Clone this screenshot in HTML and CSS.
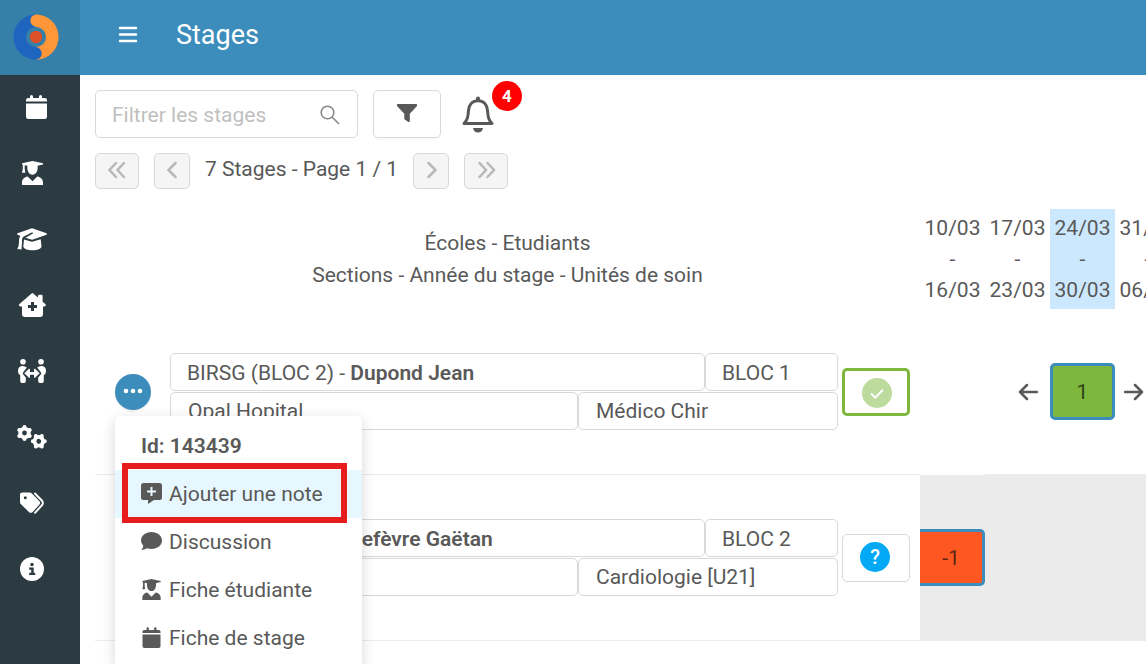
FILE: index.html
```
<!DOCTYPE html>
<html lang="fr">
<head>
<meta charset="UTF-8">
<meta name="viewport" content="width=device-width, initial-scale=1.0">
<title>Stages</title>
<link rel="stylesheet" href="styles.css">
</head>
<body>
    <!-- Shared icons -->
    <svg class="sprite" aria-hidden="true">
        <symbol id="icon-student" viewBox="0 0 21 24">
            <path d="M0 2.3 10.5 0 21 2.3v1.2L15.6 4.8c.7 4.500-1.400 9-5.100 9s-5.800-4.500-5.100-9L2.700 4.200v3.600l.600 4H0l.800-4V3.800L0 3.500z"/>
            <path d="M0 24v-2.500c0-3.400 2.400-5.500 5.700-6L10.500 20.300 15.300 15.500c3.300.5 5.700 2.600 5.700 6V24z"/>
        </symbol>
    </svg>

    <div class="sidebar">
        <a class="logo" href="#" aria-label="Accueil">
            <svg width="46" height="46" viewBox="0 0 46 46">
                <path d="M23 6.700a16.300 16.300 0 0 0 0 32.600" fill="none" stroke="#1e65c0" stroke-width="12.500"/>
                <path d="M23 6.700a16.300 16.300 0 0 1 0 32.600" fill="none" stroke="#ff9637" stroke-width="12.500"/>
                <circle cx="23.500" cy="6.700" r="6.200" fill="#ff9637"/>
                <circle cx="22.500" cy="39.300" r="6.200" fill="#1e65c0"/>
                <circle cx="23" cy="23" r="6.200" fill="#dc5028"/>
            </svg>
        </a>
        <nav class="menu">
            <a href="#" aria-label="Calendrier">
                <svg viewBox="0 0 32 32"><path d="M10 9.500V8.200Q10 6 12.200 6H14V4.500a1.500 1.500 0 0 1 3 0V6h6V4.500a1.500 1.500 0 0 1 3 0V6h2.800Q31 6 31 8.200v1.300zM10 11.500h21v13.300Q31 27 28.800 27H12.200Q10 27 10 24.800z"/></svg>
            </a>
            <a href="#" aria-label="Etudiants">
                <svg viewBox="0 0 32 32"><use href="#icon-student" x="6" y="3" width="21" height="24"/></svg>
            </a>
            <a href="#" aria-label="Écoles">
                <svg viewBox="0 0 32 32">
                    <path d="M15.200 4.400q.8-.3 1.600 0L30.500 9.300q1 .7 0 1.400L17 15.600q-1 .3-2 0L9.500 13.700 17 9.500l-.7-1.200L7.300 12.800q-1.300 1.200-1.300 3.200v2.300L5.500 25.500 1.300 25q1.700-3 1.700-6.500v-2.500q.1-2.300 1.400-4L1.600 10.800q-1.200-.8 0-1.500z"/>
                    <path d="M8 15.500 14.800 17.600q1.200.3 2.400 0L24.700 15.200l.8 7.300c0 2.200-4.500 3.800-9 3.800S7.300 24.700 7.300 22.500z"/>
                </svg>
            </a>
            <a href="#" aria-label="Hôpitaux">
                <svg viewBox="0 0 32 32"><path fill-rule="evenodd" d="M15.600 3.400q.8-.7 1.600 0L22 7.400V6q0-1.200 1.200-1.200h2.200q1.200 0 1.200 1.200v5.700l3 2.600q.8 1.800-1 2.300H27v8q0 2.400-2.400 2.400H8.500Q6 27 6 24.600v-8H4.200q-1.800-.5-1-2.300zM15 12v3h-3v3h3v3h3v-3h3v-3h-3v-3z"/></svg>
            </a>
            <a href="#" aria-label="Encadrement">
                <svg viewBox="0 0 32 32">
                    <circle cx="7" cy="5.700" r="2.800"/>
                    <circle cx="25" cy="5.700" r="2.800"/>
                    <path d="M2 14.500Q2.300 10 6.500 10q2.700 0 4.300 1.600L7 16.500q-.5 1 .2 2l2.600 3V25q0 2-1.600 2H6q-1.800 0-1.800-2v-6Q2 18.500 2 14.500zM30 14.500Q29.700 10 25.500 10q-2.700 0-4.300 1.600L25 16.500q.5 1-.2 2l-2.600 3V25q0 2 1.600 2H26q1.800 0 1.800-2v-6Q30 18.500 30 14.500z"/>
                    <path d="M8.300 17.300 13 12.800q1-.4 1 .8V16h4v-2.400q0-1.200 1-.8l4.700 4.500L19 21.800q-1 .4-1-.8v-2.300h-4V21q0 1.200-1 .8z"/>
                </svg>
            </a>
            <a href="#" aria-label="Paramètres">
                <svg viewBox="0 0 32 32">
                    <g id="gear">
                        <circle cx="8.500" cy="11" r="6.200"/>
                        <path class="teeth" d="M8.500 5v12M3.300 8l10.400 6M3.300 14l10.400-6"/>
                        <circle class="hole" cx="8.500" cy="11" r="2.400"/>
                    </g>
                    <use href="#gear" transform="translate(14.300 8.300) rotate(30 8.500 11)"/>
                </svg>
            </a>
            <a href="#" aria-label="Étiquettes">
                <svg viewBox="0 0 32 32">
                    <path fill-rule="evenodd" d="M4 6.500Q4 4.500 6.200 4.500h7.300q1.400 0 2.400 1l7.400 7.400q1.800 1.900 0 3.800l-6.600 7.200q-1.900 1.700-3.800 0L5.200 16.500Q4 15.500 4 14zM9.300 8.200a1.500 1.500 0 1 0 0 3 1.500 1.500 0 0 0 0-3z"/>
                    <path class="line" d="m19 5.500 7 7.200q1.600 2.200 0 4.400l-7 7.700"/>
                </svg>
            </a>
            <a href="#" aria-label="Informations">
                <svg viewBox="0 0 32 32">
                    <circle cx="16" cy="15" r="12"/>
                    <circle class="hole" cx="16" cy="10.500" r="1.700"/>
                    <path class="hole" d="M13.200 13.500h4.500v5.300h1.500V21h-6v-2.200h2v-3.100h-2z"/>
                </svg>
            </a>
        </nav>
    </div>

    <div class="page">
        <header class="topbar">
            <button class="burger" aria-label="Menu">
                <svg width="20" height="18" viewBox="0 0 20 18"><path d="M2 2h16M2 8.500h16M2 15h16"/></svg>
            </button>
            <h1>Stages</h1>
        </header>

        <main class="content">
            <div class="toolbar">
                <div class="search">
                    <input type="text" placeholder="Filtrer les stages" aria-label="Filtrer les stages">
                    <svg width="20" height="20" viewBox="0 0 20 20"><circle cx="7.500" cy="7.500" r="6.300"/><path d="m12 12 7 7"/></svg>
                </div>
                <button class="filter" aria-label="Filtrer">
                    <svg width="22" height="20" viewBox="0 0 22 20"><path d="M1.500 1h19q1.200.5.500 2l-7.200 7.700v7.600q-.3 1.100-1.400.7l-3.300-2.300q-.8-.5-.8-1.300v-4.700L1 3Q.3 1.500 1.500 1z"/></svg>
                </button>
                <button class="bell" aria-label="Notifications">
                    <svg width="32" height="37" viewBox="0 0 32 37">
                        <path class="line" d="M2 27.500c3.500-3.500 4-6.500 4.500-13C7 8.500 10.500 4.700 16 4.700s9 3.800 9.500 9.800c.5 6.500 1 9.500 4.500 13z"/>
                        <path d="M14 4V2.500a2 2 0 0 1 4 0V4zM11 32h10q-1 4.500-5 4.500T11 32z"/>
                    </svg>
                    <span class="badge">4</span>
                </button>
            </div>

            <div class="pager">
                <button class="wide" disabled aria-label="Première page">
                    <svg width="20" height="18" viewBox="0 0 20 18"><path d="M9 2 2.500 9 9 16M17 2l-6.500 7 6.500 7"/></svg>
                </button>
                <button disabled aria-label="Page précédente">
                    <svg width="20" height="18" viewBox="0 0 20 18"><path d="M13.500 2 6.500 9l7 7"/></svg>
                </button>
                <span>7 Stages - Page 1 / 1</span>
                <button disabled aria-label="Page suivante">
                    <svg width="20" height="18" viewBox="0 0 20 18"><path d="m7.500 2 7 7-7 7"/></svg>
                </button>
                <button class="wide" disabled aria-label="Dernière page">
                    <svg width="20" height="18" viewBox="0 0 20 18"><path d="m3.500 2 6.500 7-6.500 7M11.500 2l6.500 7-6.500 7"/></svg>
                </button>
            </div>

            <div class="planning">
                <div class="row head">
                    <div class="titles">
                        <div>Écoles - Etudiants</div>
                        <div>Sections - Année du stage - Unités de soin</div>
                    </div>
                    <div class="weeks">
                        <div class="week">10/03<br>-<br>16/03</div>
                        <div class="week">17/03<br>-<br>23/03</div>
                        <div class="week current">24/03<br>-<br>30/03</div>
                        <div class="week">31/03<br>-<br>06/04</div>
                    </div>
                </div>

                <div class="row">
                    <div class="stage">
                        <div class="actions">
                            <button class="more" aria-label="Actions">
                                <svg width="20" height="6" viewBox="0 0 20 6"><circle cx="3" cy="3" r="2.300"/><circle cx="10" cy="3" r="2.300"/><circle cx="17" cy="3" r="2.300"/></svg>
                            </button>
                            <div class="dropdown">
                                <div class="item"><b>Id: 143439</b></div>
                                <button class="item active">
                                    <svg viewBox="0 0 21 21"><path fill-rule="evenodd" d="M2.500 0h16Q21 0 21 2.500v12q0 2.500-2.500 2.500H13l-6 4v-4H2.500Q0 17 0 14.500v-12Q0 0 2.500 0zM9.500 4v3.500H6v2h3.500V13h2V9.500H15v-2h-3.500V4z"/></svg>
                                    Ajouter une note
                                    <span class="marker"></span>
                                </button>
                                <button class="item">
                                    <svg viewBox="0 0 21 21"><path d="M10.500 1C16.500 1 21 4.700 21 9.500S16.500 18 10.500 18q-2.500 0-4.600-.8Q3.500 19 .3 19q1.800-1.900 2-4.200Q0 12.500 0 9.500C0 4.700 4.500 1 10.500 1z"/></svg>
                                    Discussion
                                </button>
                                <button class="item">
                                    <svg viewBox="0 0 21 21"><use href="#icon-student" width="21" height="21"/></svg>
                                    Fiche étudiante
                                </button>
                                <button class="item">
                                    <svg viewBox="0 0 21 21"><path d="M1.500 6V4.500Q1.500 3 3 3h2.500V1.500a1.200 1.200 0 0 1 2.400 0V3h5.200V1.500a1.200 1.200 0 0 1 2.400 0V3H18q1.500 0 1.500 1.500V6zM1.500 7.500h18v11.700Q19.500 21 17.700 21H3.300q-1.800 0-1.800-1.800z"/></svg>
                                    Fiche de stage
                                </button>
                            </div>
                        </div>
                        <div class="fields">
                            <div class="line1">
                                <div class="field">BIRSG (BLOC 2) - <b>Dupond Jean</b></div>
                                <div class="field">BLOC 1</div>
                            </div>
                            <div class="line2">
                                <div class="field">Opal Hopital</div>
                                <div class="field">Médico Chir</div>
                            </div>
                        </div>
                        <button class="status ok" aria-label="Validé">
                            <svg width="30" height="30" viewBox="0 0 30 30"><circle cx="15" cy="15" r="15"/><path d="m9 15.500 4.200 4.200 7.800-8"/></svg>
                        </button>
                    </div>
                    <div class="weeks">
                        <div class="week plain"></div>
                        <div class="week before">
                            <svg width="20" height="18" viewBox="0 0 20 18"><path d="M19 9H2M9 2 2 9l7 7"/></svg>
                        </div>
                        <div class="week"><div class="slot green">1</div></div>
                        <div class="week after">
                            <svg width="20" height="18" viewBox="0 0 20 18"><path d="M1 9h17M11 2l7 7-7 7"/></svg>
                        </div>
                    </div>
                </div>

                <div class="row">
                    <div class="stage">
                        <div class="actions"></div>
                        <div class="fields">
                            <div class="line1">
                                <div class="field">BIRSG (BLOC 2) - <b>Lefèvre Gaëtan</b></div>
                                <div class="field">BLOC 2</div>
                            </div>
                            <div class="line2">
                                <div class="field"></div>
                                <div class="field">Cardiologie [U21]</div>
                            </div>
                        </div>
                        <button class="status"><span>?</span></button>
                    </div>
                    <div class="weeks closed">
                        <div class="week"><div class="slot orange">-1</div></div>
                    </div>
                </div>
            </div>
        </main>
    </div>
</body>
</html>
```

FILE: styles.css
```
* {
    box-sizing: border-box;
}
body {
    display: flex;
    height: 100vh;
    margin: 0;
    overflow: hidden;
    font-family: Roboto, sans-serif;
    font-size: 21px;
    line-height: 32px;
    color: #595959;
    background: #fff;
}
button {
    padding: 0;
    border: none;
    background: none;
    font: inherit;
    color: inherit;
    cursor: pointer;
}
b {
    font-weight: 600;
}
svg {
    display: block;
    flex: none;
    fill: currentColor;
}
.sprite {
    position: absolute;
    width: 0;
    height: 0;
}

/* Sidebar */
.sidebar {
    flex: none;
    width: 80px;
    background: #2c3b41;
}
.logo {
    display: flex;
    align-items: center;
    height: 75px;
    padding: 0 0 2px 13px;
    background: #367fa9;
}
.menu a {
    display: flex;
    align-items: center;
    height: 66px;
    padding-left: 16px;
    color: #fff;
}
.menu svg {
    width: 32px;
    height: 32px;
}
.menu .hole {
    fill: #2c3b41;
}
.menu .teeth {
    stroke: #fff;
    stroke-width: 4;
    stroke-linecap: round;
}
.menu .line {
    fill: none;
    stroke: #fff;
    stroke-width: 2;
    stroke-linecap: round;
}

/* Top bar */
.page {
    flex: 1;
    min-width: 0;
}
.topbar {
    display: flex;
    align-items: center;
    gap: 38px;
    height: 75px;
    padding: 0 38px 6px;
    background: #3c8dbc;
    color: #fff;
}
.burger svg {
    fill: none;
    stroke: #fff;
    stroke-width: 2.5;
    stroke-linecap: round;
}
h1 {
    margin: 0;
    font-size: 27px;
    font-weight: 400;
}

/* Toolbar */
.content {
    padding: 15px 0 0 15px;
}
.toolbar {
    display: flex;
    gap: 15px;
    margin-bottom: 15px;
}
.search {
    display: flex;
    align-items: center;
    width: 263px;
    height: 48px;
    padding: 1px 17px 0 16px;
    border: 1px solid #d9d9d9;
    border-radius: 5px;
}
.search input {
    flex: 1;
    min-width: 0;
    padding: 0;
    border: none;
    outline: none;
    font: inherit;
}
.search input::placeholder {
    color: #bfbfbf;
}
.search svg {
    fill: none;
    stroke: #888;
    stroke-width: 1.6;
}
.filter {
    display: flex;
    align-items: center;
    justify-content: center;
    width: 68px;
    padding-bottom: 3px;
    border: 1px solid #d9d9d9;
    border-radius: 5px;
    box-shadow: 0 2px 0 rgba(0,0,0,0.02);
}
.bell {
    position: relative;
    margin-left: 6px;
}
.bell .line {
    fill: none;
    stroke: currentColor;
    stroke-width: 3;
    stroke-linejoin: round;
}
.badge {
    position: absolute;
    top: -9px;
    left: 30px;
    width: 30px;
    border-radius: 15px;
    background: #f00;
    color: #fff;
    font-size: 17px;
    font-weight: 700;
    line-height: 30px;
}

.pager {
    display: flex;
    gap: 15px;
    margin-bottom: 15px;
}
.pager button {
    display: flex;
    justify-content: center;
    width: 36px;
    height: 36px;
    padding-top: 7px;
    border: 1px solid #d9d9d9;
    border-radius: 5px;
    background: #f5f5f5;
}
.pager button.wide {
    width: 44px;
}
.pager svg {
    fill: none;
    stroke: #b8b8b8;
    stroke-width: 2.5;
    stroke-linecap: round;
}

/* Planning */
.row {
    display: flex;
    height: 166px;
}
.head {
    height: 105px;
    padding-top: 5px;
}
.titles {
    flex: none;
    width: 825px;
    padding-top: 18px;
    text-align: center;
}
.weeks {
    display: flex;
    flex: 1;
    min-width: 0;
    overflow: hidden;
}
.week {
    display: flex;
    flex: none;
    align-items: center;
    justify-content: center;
    width: 65px;
    border-bottom: 1px solid #ebebeb;
}
.week.plain {
    border-color: transparent;
}
.head .week {
    display: block;
    padding-top: 4px;
    border: none;
    line-height: 31px;
    text-align: center;
}
.head .current {
    background: #cce8ff;
}
.closed {
    background: #ebebeb;
}
.before {
    justify-content: flex-end;
    padding-right: 12px;
}
.after {
    justify-content: flex-start;
    padding-left: 9px;
}
.week svg {
    fill: none;
    stroke: #595959;
    stroke-width: 2.5;
    stroke-linecap: round;
    stroke-linejoin: round;
}
.slot {
    width: 65px;
    height: 57px;
    padding-top: 1px;
    border: 3px solid #3c8dbc;
    border-radius: 5px;
    line-height: 51px;
    text-align: center;
    color: #30441c;
}
.green {
    background: #7eb73d;
}
.orange {
    border-left: none;
    border-radius: 0 5px 5px 0;
    background: #ff5722;
    color: #5f2414;
}

.stage {
    display: flex;
    flex: none;
    align-items: center;
    width: 825px;
    border-bottom: 1px solid #ebebeb;
}
.actions {
    position: relative;
    width: 75px;
    padding-left: 20px;
}
.more {
    display: flex;
    align-items: center;
    justify-content: center;
    width: 36px;
    height: 36px;
    padding-bottom: 2px;
    border-radius: 50%;
    background: #3c8dbc;
    color: #fff;
    box-shadow: 0 2px 2px rgba(0,0,0,0.06);
}
.fields {
    display: flex;
    flex: 1;
    flex-direction: column;
    gap: 1px;
}
.line1, .line2 {
    display: grid;
    grid-template-columns: 535fr 133fr;
}
.line2 {
    grid-template-columns: 408fr 260fr;
}
.field {
    height: 38px;
    padding: 2px 16px;
    border: 1px solid #d9d9d9;
    border-radius: 5px;
    white-space: nowrap;
}
.line1 .field {
    padding-top: 3px;
}
.line2 .field {
    padding-left: 17px;
}
.status {
    display: flex;
    align-items: center;
    justify-content: center;
    width: 68px;
    height: 48px;
    margin: 0 10px 0 4px;
    border: 1px solid #d9d9d9;
    border-radius: 5px;
}
.status.ok {
    padding: 2px 0 0 2px;
    border: 3px solid #7eb73d;
}
.status circle {
    fill: #bedb9e;
}
.status path {
    fill: none;
    stroke: #fff;
    stroke-width: 2;
}
.status span {
    width: 30px;
    margin: 0 2px 2px 0;
    border-radius: 50%;
    background: #03a9f4;
    color: #fff;
    font-size: 20px;
    font-weight: 500;
    line-height: 30px;
}

/* Actions menu */
.dropdown {
    position: absolute;
    z-index: 10;
    top: 42px;
    left: 20px;
    width: 247px;
    padding: 6px 0;
    border-radius: 5px;
    background: #fff;
    box-shadow: 0 4px 14px rgba(0,0,0,0.16);
}
.item {
    display: flex;
    align-items: center;
    gap: 7px;
    position: relative;
    width: 100%;
    height: 48px;
    padding: 0 26px;
}
.item svg {
    width: 21px;
    height: 21px;
}
.item.active {
    background: #e6f7ff;
}
.marker {
    position: absolute;
    inset: -7px 15px -5px 7px;
    border: 6px solid #e71c1c;
}
```
